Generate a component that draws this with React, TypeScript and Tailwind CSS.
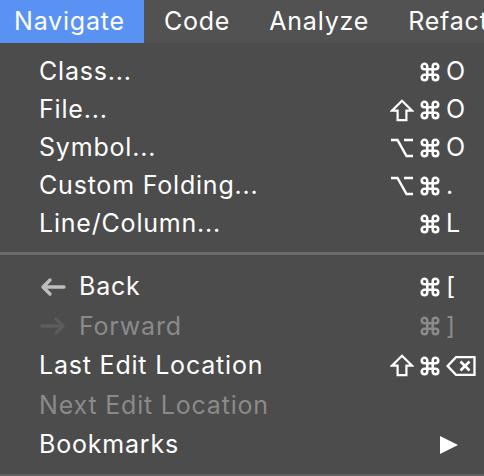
import React from "react";

type Mod = "cmd" | "shift" | "opt";

type Item = {
  label: string;
  mods?: Mod[];
  keyName?: string;
  disabled?: boolean;
  icon?: "back" | "forward";
  submenu?: boolean;
};

const groupOne: Item[] = [
  { label: "Class...", mods: ["cmd"], keyName: "O" },
  { label: "File...", mods: ["shift", "cmd"], keyName: "O" },
  { label: "Symbol...", mods: ["opt", "cmd"], keyName: "O" },
  { label: "Custom Folding...", mods: ["opt", "cmd"], keyName: "." },
  { label: "Line/Column...", mods: ["cmd"], keyName: "L" },
];

const groupTwo: Item[] = [
  { label: "Back", mods: ["cmd"], keyName: "[", icon: "back" },
  { label: "Forward", mods: ["cmd"], keyName: "]", icon: "forward", disabled: true },
  { label: "Last Edit Location", mods: ["shift", "cmd"], keyName: "del" },
  { label: "Next Edit Location", disabled: true },
  { label: "Bookmarks", submenu: true },
];

const Arrow = ({ dir, dim }: { dir: "back" | "forward"; dim?: boolean }) => (
  <svg
    width="28"
    height="20"
    viewBox="0 0 28 20"
    className={dim ? "text-[#5c5c5c]" : "text-[#bdbdbd]"}
    fill="none"
    stroke="currentColor"
    strokeWidth="3.4"
    strokeLinecap="round"
    strokeLinejoin="round"
  >
    {dir === "back" ? (
      <path d="M25 10H4M11 3L4 10l7 7" />
    ) : (
      <path d="M3 10h21M17 3l7 7-7 7" />
    )}
  </svg>
);

const ModIcon = ({ m }: { m: Mod }) => {
  if (m === "cmd")
    return (
      <svg width="22" height="22" viewBox="0 0 24 24" fill="none" stroke="currentColor" strokeWidth="2.8">
        <path d="M15 6v12a3 3 0 1 0 3-3H6a3 3 0 1 0 3 3V6a3 3 0 1 0-3 3h12a3 3 0 1 0-3-3" />
      </svg>
    );
  if (m === "shift")
    return (
      <svg width="24" height="23" viewBox="0 0 24 23" fill="none" stroke="currentColor" strokeWidth="2.2" strokeLinejoin="miter">
        <path d="M12 1.8L22 11.6h-5.6v9.6H7.6v-9.6H2z" />
      </svg>
    );
  return (
    <svg width="24" height="22" viewBox="0 0 24 22" fill="none" stroke="currentColor" strokeWidth="2.4">
      <path d="M1 3h6.5l9 16H23M14 3h9" />
    </svg>
  );
};

const DeleteIcon = () => (
  <svg width="30" height="22" viewBox="0 0 30 22" fill="none" stroke="currentColor" strokeWidth="2.3" strokeLinejoin="miter">
    <path d="M10 2.2h18.5v17.6H10L1.6 11z" />
    <path d="M14.5 6.5l9 9M23.5 6.5l-9 9" strokeWidth="2.6" />
  </svg>
);

const Row = ({ item, h }: { item: Item; h: string }) => {
  const text = item.disabled ? "text-[#8a8a8a]" : "text-white";
  return (
    <div className={`flex ${h} items-center pl-[39px] pr-[8px] ${text}`}>
      <div className="flex flex-1 items-center">
        {item.icon && (
          <span className="mr-[12px] flex w-[28px] items-center">
            <Arrow dir={item.icon} dim={item.disabled} />
          </span>
        )}
        <span>{item.label}</span>
      </div>
      {item.submenu ? (
        <svg width="18" height="18" viewBox="0 0 18 18" className="mr-[18px]" fill="currentColor">
          <path d="M0 0L18 9 0 18z" />
        </svg>
      ) : item.mods ? (
        <div className="flex items-center">
          <span className="flex items-center justify-end gap-[5px]">
            {item.mods.map((m, i) => (
              <span key={i} className="flex items-center">
                <ModIcon m={m} />
              </span>
            ))}
          </span>
          <span className="ml-[5px] flex w-[30px] items-center">
            {item.keyName === "del" ? <DeleteIcon /> : item.keyName}
          </span>
        </div>
      ) : null}
    </div>
  );
};

export default function App() {
  return (
    <div className="h-[476px] w-[484px] overflow-hidden bg-[#4c4c4c] font-['Inter'] text-[25px] tracking-[0.8px]">
      <div className="flex h-[43px] items-center bg-[#525252] text-white whitespace-nowrap">
        <div className="flex h-full items-center bg-[#5992f3] pr-[19px] pl-[14px]">Navigate</div>
        <div className="pl-[20px]">Code</div>
        <div className="pl-[39px]">Analyze</div>
        <div className="pl-[39px]">Refactor</div>
      </div>
      <div className="flex h-[433px] flex-col border-b-2 border-[#5f5f5f]">
        <div className="pt-[10px]">
          {groupOne.map((it) => (
            <Row key={it.label} item={it} h="h-[38px]" />
          ))}
        </div>
        <div className="mt-[9px] mb-[12px] h-[3px] bg-[#6a6a6a]" />
        <div>
          {groupTwo.map((it) => (
            <Row key={it.label} item={it} h="h-[39.5px]" />
          ))}
        </div>
      </div>
    </div>
  );
}
